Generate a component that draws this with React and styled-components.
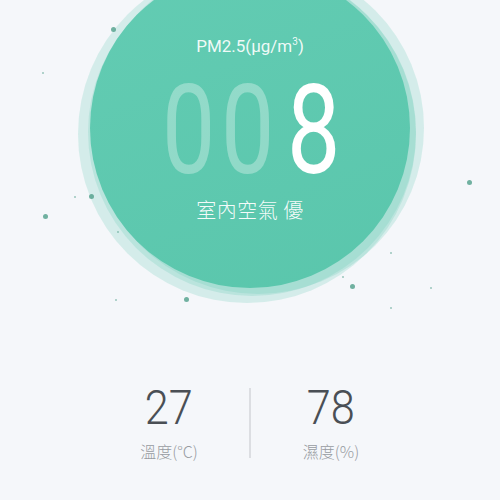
import styled, { createGlobalStyle } from "styled-components";

const GlobalStyle = createGlobalStyle`
  html, body {
    margin: 0;
    padding: 0;
    background: #f5f7fa;
  }
  body {
    font-family: Roboto, "Noto Sans CJK TC", sans-serif;
  }
`;

const particles = [
  { x: 113, y: 29, r: 2.5 },
  { x: 43, y: 73, r: 1.2 },
  { x: 469, y: 182, r: 2.5 },
  { x: 91, y: 196, r: 2.5 },
  { x: 75, y: 197, r: 1.2 },
  { x: 45, y: 216, r: 2.5 },
  { x: 118, y: 232, r: 1.2 },
  { x: 391, y: 253, r: 1.2 },
  { x: 343, y: 277, r: 1.2 },
  { x: 352, y: 286, r: 2.5 },
  { x: 431, y: 288, r: 1.2 },
  { x: 116, y: 300, r: 1.2 },
  { x: 186, y: 299, r: 2.5 },
  { x: 391, y: 308, r: 1.2 },
];

export default function App() {
  return (
    <Page>
      <GlobalStyle />
      <Hero>
        <Halo $size={338} $dx={-3} $dy={6} />
        <Halo $size={332} $dx={8} $dy={0} />
        <Halo $size={328} $dx={2} $dy={4} />
        <Dial>
          <Unit>
            PM2.5(µg/m<sup>3</sup>)
          </Unit>
          <Reading>
            <Digit $dim>0</Digit>
            <Digit $dim>0</Digit>
            <Digit $lead>8</Digit>
          </Reading>
          <Quality>室內空氣 優</Quality>
        </Dial>
        {particles.map((p, i) => (
          <Particle
            key={i}
            style={{
              left: p.x - p.r,
              top: p.y - p.r,
              width: p.r * 2,
              height: p.r * 2,
              opacity: p.r > 2 ? 0.8 : 0.55,
            }}
          />
        ))}
      </Hero>
      <Stats>
        <Stat>
          <StatValue>27</StatValue>
          <StatLabel>溫度(°C)</StatLabel>
        </Stat>
        <Divider />
        <Stat>
          <StatValue>78</StatValue>
          <StatLabel>濕度(%)</StatLabel>
        </Stat>
      </Stats>
    </Page>
  );
}

const Page = styled.div`
  width: 500px;
  height: 500px;
  overflow: hidden;
  background: #f5f7fa;
  display: flex;
  flex-direction: column;
`;

const Hero = styled.div`
  position: relative;
  height: 340px;
  display: flex;
  justify-content: center;
`;

const Halo = styled.div`
  position: absolute;
  width: ${(p) => p.$size}px;
  height: ${(p) => p.$size}px;
  border-radius: 50%;
  left: ${(p) => 250 - p.$size / 2 + p.$dx}px;
  top: ${(p) => 128 - p.$size / 2 + p.$dy}px;
  background: rgba(94, 201, 176, 0.22);
`;

const Dial = styled.div`
  position: relative;
  margin-top: -32px;
  width: 320px;
  height: 320px;
  flex-shrink: 0;
  border-radius: 50%;
  background: linear-gradient(160deg, #63ccb3 0%, #5ac6ac 100%);
  display: flex;
  flex-direction: column;
  align-items: center;
  padding-top: 68px;
  box-sizing: border-box;
  color: #fff;
`;

const Unit = styled.div`
  font-family: Roboto, sans-serif;
  font-size: 17px;
  line-height: 20px;
  color: rgba(255, 255, 255, 0.92);

  sup {
    font-size: 10px;
    vertical-align: 7px;
    line-height: 0;
  }
`;

const Reading = styled.div`
  margin: 12px 6px 0 0;
  display: flex;
  font-family: Roboto, sans-serif;
  font-weight: 400;
  font-size: 125px;
  line-height: 125px;
  height: 125px;
`;

const Digit = styled.span`
  display: inline-block;
  width: 59px;
  margin-left: ${(p) => (p.$lead ? "7px" : "0")};
  text-align: center;
  transform: scaleX(0.76);
  color: ${(p) => (p.$dim ? "rgba(255, 255, 255, 0.32)" : "#ffffff")};
`;

const Quality = styled.div`
  margin-top: 4px;
  font-family: "Noto Sans CJK TC", sans-serif;
  font-weight: 300;
  font-size: 20px;
  line-height: 26px;
  letter-spacing: 0.5px;
  color: rgba(255, 255, 255, 0.95);
`;

const Particle = styled.span`
  position: absolute;
  border-radius: 50%;
  background: #4f9f89;
`;

const Stats = styled.div`
  margin-top: 44px;
  display: flex;
  justify-content: center;
  align-items: center;
`;

const Stat = styled.div`
  width: 160px;
  display: flex;
  flex-direction: column;
  align-items: center;
`;

const StatValue = styled.div`
  font-family: Roboto, sans-serif;
  font-weight: 300;
  font-size: 48px;
  line-height: 48px;
  color: #4a4f55;
  transform: scaleX(0.9);
`;

const StatLabel = styled.div`
  margin-top: 9px;
  font-family: "Noto Sans CJK TC", sans-serif;
  font-weight: 300;
  font-size: 16px;
  line-height: 20px;
  color: #979ba1;
`;

const Divider = styled.div`
  width: 2px;
  height: 70px;
  background: #dcdee2;
`;
